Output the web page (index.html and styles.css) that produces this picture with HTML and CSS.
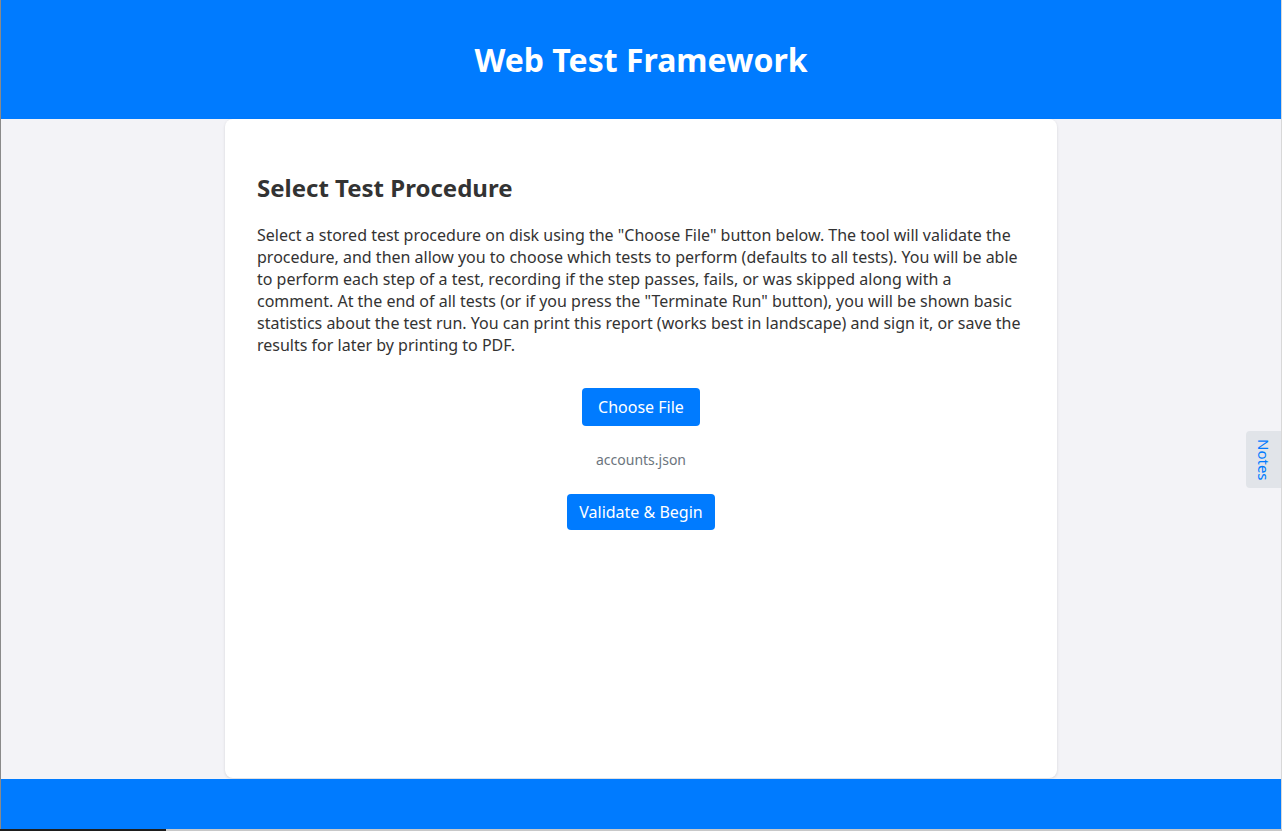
FILE: index.html
```html
<!DOCTYPE html>
<html lang="en">
<head>
<meta charset="utf-8">
<title>Web Test Framework</title>
<link rel="stylesheet" href="styles.css">
</head>
<body>
<div class="app">
  <header class="top-bar">
    <h1 class="title">Web Test Framework</h1>
  </header>
  <main class="main">
    <section class="card">
      <h2 class="card-title">Select Test Procedure</h2>
      <p class="intro">Select a stored test procedure on disk using the "Choose File" button below. The tool will validate the procedure, and then allow you to choose which tests to perform (defaults to all tests). You will be able to perform each step of a test, recording if the step passes, fails, or was skipped along with a comment. At the end of all tests (or if you press the "Terminate Run" button), you will be shown basic statistics about the test run. You can print this report (works best in landscape) and sign it, or save the results for later by printing to PDF.</p>
      <div class="actions">
        <button class="btn btn-file">Choose File</button>
        <div class="file-name">accounts.json</div>
        <button class="btn btn-begin">Validate &amp; Begin</button>
      </div>
    </section>
  </main>
  <footer class="bottom-bar"></footer>
  <div class="notes-tab">Notes</div>
</div>
<div class="desk-strip"></div>
</body>
</html>
```

FILE: styles.css
```css
html, body {
  margin: 0;
  padding: 0;
}
body {
  background: #2a2a2a;
  font-family: "Noto Sans", "Open Sans", "DejaVu Sans", sans-serif;
  color: #333;
  width: 1282px;
  height: 831px;
  overflow: hidden;
}
.app {
  position: relative;
  width: 1280px;
  height: 829px;
  border-left: 1px solid #8a8a8a;
  border-right: 1px solid #d8d8d8;
  background: #f3f3f7;
  display: flex;
  flex-direction: column;
}
.top-bar {
  height: 119px;
  background: #007bff;
  display: flex;
  align-items: center;
  justify-content: center;
  flex: none;
}
.title {
  margin: 0;
  color: #fff;
  font-size: 32px;
  font-weight: 700;
  line-height: 1;
}
.main {
  flex: 1;
  display: flex;
  justify-content: center;
  padding-bottom: 1px;
}
.card {
  width: 768px;
  background: #fff;
  border-radius: 8px;
  box-shadow: 0 1px 3px rgba(0,0,0,0.12);
  padding: 32px;
}
.card-title {
  margin: 20px 0 20px;
  font-size: 24px;
  font-weight: 700;
  line-height: 33px;
  color: #333;
}
.intro {
  margin: 0 0 32px;
  font-size: 16px;
  line-height: 22px;
  color: #333;
}
.actions {
  display: flex;
  flex-direction: column;
  align-items: center;
}
.btn {
  font-family: "Noto Sans", sans-serif;
  font-size: 16px;
  line-height: 22px;
  color: #fff;
  background: #007bff;
  border: none;
  border-radius: 4px;
  padding: 8px 16px;
}
.btn-begin {
  padding: 7px 12px;
}
.file-name {
  margin: 24px 0;
  font-size: 14px;
  line-height: 20px;
  color: #6c757d;
}
.bottom-bar {
  height: 50px;
  background: #007bff;
  flex: none;
}
.notes-tab {
  position: absolute;
  right: 0;
  top: 431px;
  width: 35px;
  height: 57px;
  background: #e1e4e9;
  border-radius: 4px 0 0 4px;
  color: #007bff;
  font-size: 15px;
  writing-mode: vertical-rl;
  display: flex;
  align-items: center;
  justify-content: center;
}
.desk-strip {
  height: 2px;
  background: linear-gradient(to right, #1e1e1e 0 166px, #c8c8c8 166px);
}
```
